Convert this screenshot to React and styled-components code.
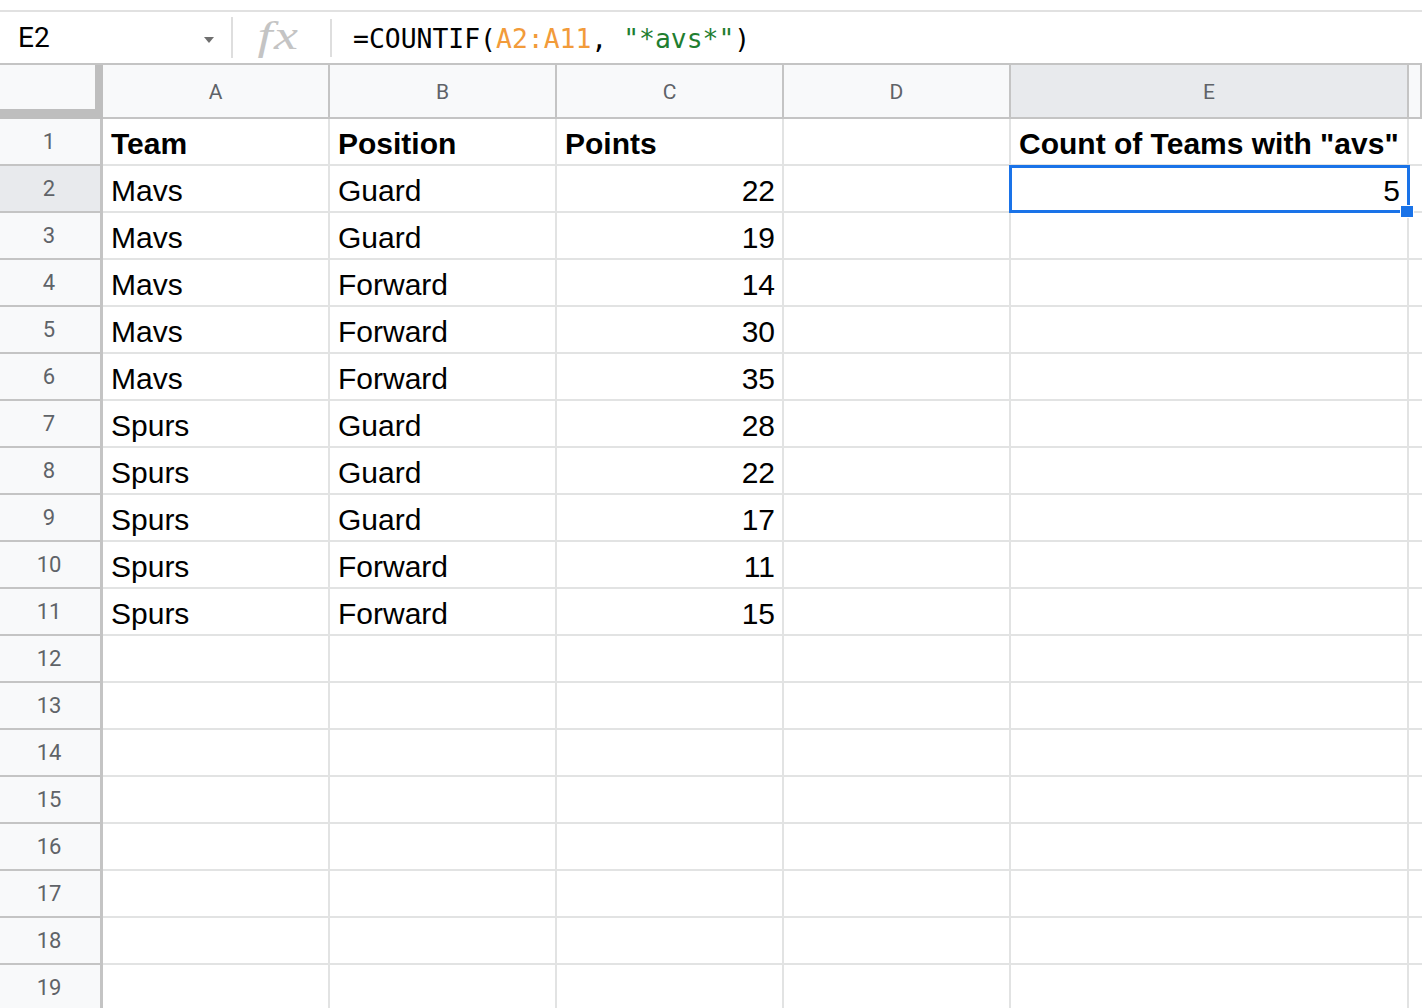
import React from "react";
import styled, { createGlobalStyle } from "styled-components";

const Global = createGlobalStyle`
  html, body { margin: 0; padding: 0; background: #ffffff; overflow: hidden; }
  * { box-sizing: border-box; }
`;

const Page = styled.div`
  width: 1422px;
  height: 1008px;
  overflow: hidden;
  display: flex;
  flex-direction: column;
`;

const TopStrip = styled.div`
  height: 12px;
  flex: none;
  border-bottom: 2px solid #e1e1e1;
`;

const FormulaBar = styled.div`
  height: 53px;
  flex: none;
  display: flex;
  align-items: center;
  border-bottom: 2px solid #c4c4c4;
`;

const NameBox = styled.div`
  width: 231px;
  height: 100%;
  display: flex;
  align-items: center;
  justify-content: space-between;
  padding: 0 17px 0 18px;
  font-family: Roboto, "Liberation Sans", sans-serif;
  font-size: 28px;
  color: #000;
`;

const Caret = styled.span`
  width: 0;
  height: 0;
  border-left: 5px solid transparent;
  border-right: 5px solid transparent;
  border-top: 6px solid #6f6f6f;
  margin-top: 4px;
`;

const Separator = styled.div`
  width: 2px;
  height: ${(p) => p.$h || 40}px;
  background: #dedede;
  flex: none;
`;

const FxLabel = styled.div`
  width: 97px;
  display: flex;
  justify-content: center;
  align-items: center;
  font-family: "Liberation Serif", serif;
  font-style: italic;
  font-size: 40px;
  color: #c4c4c4;
  padding-right: 6px;
  margin-top: -4px;
`;

const FxGlyphs = styled.span`
  display: inline-block;
  transform: scaleX(1.35);
  letter-spacing: 1px;
`;

const FormulaText = styled.div`
  padding-left: 21px;
  font-family: "DejaVu Sans Mono", "Liberation Mono", monospace;
  font-size: 26.4px;
  color: #000;
  white-space: pre;
  margin-top: 2px;
`;

const Ref = styled.span`
  color: #f29b3a;
`;

const Str = styled.span`
  color: #1f7e30;
`;

const Grid = styled.div`
  display: flex;
  flex-direction: column;
`;

const HeadRow = styled.div`
  display: flex;
  height: 54px;
  flex: none;
`;

const Corner = styled.div`
  width: 103px;
  flex: none;
  background: #f8f9fa;
  border-right: 8px solid #bebebe;
  border-bottom: 10px solid #bebebe;
`;

const ColHead = styled.div`
  width: ${(p) => (p.$w ? `${p.$w}px` : "auto")};
  flex: ${(p) => (p.$w ? "none" : "1")};
  background: ${(p) => (p.$active ? "#e8eaed" : "#f8f9fa")};
  border-right: 2px solid #c4c4c4;
  border-bottom: 2px solid #c4c4c4;
  display: flex;
  align-items: center;
  justify-content: center;
  font-family: Roboto, "Liberation Sans", sans-serif;
  font-size: 21px;
  color: #5f6368;
  padding-top: 1px;
`;

const Row = styled.div`
  display: flex;
  height: 47px;
  flex: none;
`;

const RowHead = styled.div`
  width: 103px;
  flex: none;
  background: ${(p) => (p.$active ? "#e8eaed" : "#f8f9fa")};
  border-right: 3px solid #c4c4c4;
  border-bottom: 2px solid #c4c4c4;
  display: flex;
  align-items: center;
  justify-content: center;
  font-family: Roboto, "Liberation Sans", sans-serif;
  font-size: 22px;
  color: #5f6368;
  padding-right: 2px;
`;

const Cell = styled.div`
  position: relative;
  width: ${(p) => (p.$w ? `${p.$w}px` : "auto")};
  flex: ${(p) => (p.$w ? "none" : "1")};
  border-right: 2px solid #e2e3e3;
  border-bottom: 2px solid #e2e3e3;
  display: flex;
  align-items: center;
  justify-content: ${(p) => (p.$right ? "flex-end" : "flex-start")};
  padding: 5px 7px 0 8px;
  font-family: "Liberation Sans", Arial, sans-serif;
  font-size: 30px;
  font-weight: ${(p) => (p.$bold ? 700 : 400)};
  color: #000;
  white-space: nowrap;
  z-index: ${(p) => (p.$selected ? 2 : 1)};
`;

const Selection = styled.div`
  position: absolute;
  top: -1px;
  left: -2px;
  right: -3px;
  bottom: -2px;
  border: 3px solid #1a73e8;
  pointer-events: none;
`;

const Handle = styled.div`
  position: absolute;
  right: -7px;
  bottom: -8px;
  width: 14px;
  height: 13px;
  background: #1a73e8;
  border: 1px solid #ffffff;
`;

const widths = [227, 227, 227, 227, 398, 0];
const letters = ["A", "B", "C", "D", "E", ""];

const data = [
  ["Team", "Position", "Points", "", 'Count of Teams with "avs"'],
  ["Mavs", "Guard", "22", "", "5"],
  ["Mavs", "Guard", "19", "", ""],
  ["Mavs", "Forward", "14", "", ""],
  ["Mavs", "Forward", "30", "", ""],
  ["Mavs", "Forward", "35", "", ""],
  ["Spurs", "Guard", "28", "", ""],
  ["Spurs", "Guard", "22", "", ""],
  ["Spurs", "Guard", "17", "", ""],
  ["Spurs", "Forward", "11", "", ""],
  ["Spurs", "Forward", "15", "", ""],
];

export default function App() {
  const rows = [];
  for (let r = 0; r < 19; r++) {
    const vals = data[r] || ["", "", "", "", ""];
    rows.push(
      <Row key={r}>
        <RowHead $active={r === 1}>{r + 1}</RowHead>
        {widths.map((w, c) => {
          const v = vals[c] || "";
          const numeric = r > 0 && v !== "" && !isNaN(Number(v));
          const selected = r === 1 && c === 4;
          return (
            <Cell key={c} $w={w} $bold={r === 0} $right={numeric} $selected={selected}>
              {v}
              {selected && (
                <Selection>
                  <Handle />
                </Selection>
              )}
            </Cell>
          );
        })}
      </Row>
    );
  }

  return (
    <Page>
      <Global />
      <TopStrip />
      <FormulaBar>
        <NameBox>
          E2
          <Caret />
        </NameBox>
        <Separator $h={41} />
        <FxLabel>
          <FxGlyphs>fx</FxGlyphs>
        </FxLabel>
        <Separator $h={38} />
        <FormulaText>
          =COUNTIF(<Ref>A2:A11</Ref>, <Str>"*avs*"</Str>)
        </FormulaText>
      </FormulaBar>
      <Grid>
        <HeadRow>
          <Corner />
          {widths.map((w, c) => (
            <ColHead key={c} $w={w} $active={c === 4}>
              {letters[c]}
            </ColHead>
          ))}
        </HeadRow>
        {rows}
      </Grid>
    </Page>
  );
}
